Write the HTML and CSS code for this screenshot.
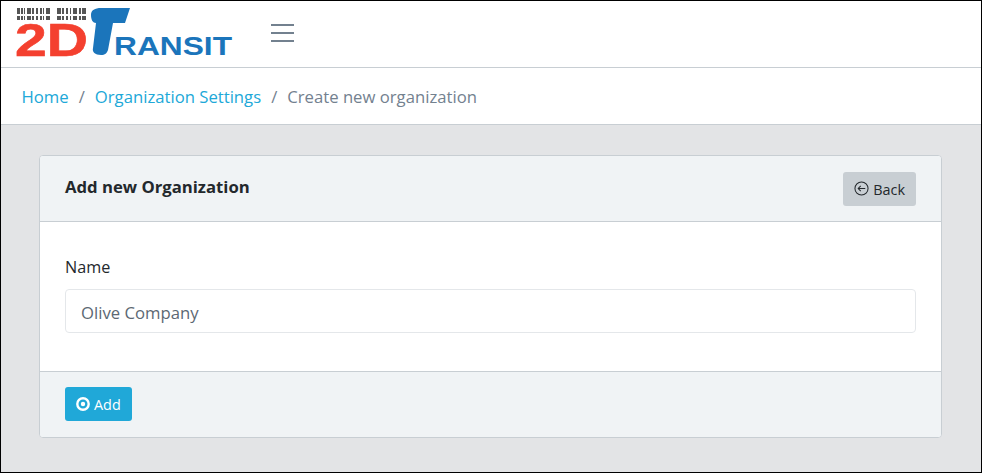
FILE: index.html
```html
<!DOCTYPE html>
<html lang="en">
<head>
<meta charset="utf-8">
<title>Create new organization</title>
<link rel="stylesheet" href="styles.css">
</head>
<body>
<div class="frame">
  <header class="topbar">
    <a class="logo" href="#" aria-label="2D Transit">
      <svg width="222" height="58" viewBox="0 0 222 58" class="logo-svg">
        <g fill="#555">
          <path d="M2 0h3v6H2zM6 0h2v6H6zM9 0h1v6H9zM12 0h4v6h-4zM17 0h2v6h-2zM21 0h2v6h-2zM25 0h2v6h-2zM28 0h1v6h-1zM31 0h4v6h-4z"/>
          <path d="M2 8h3v4H2zM6 8h2v4H6zM9 8h1v4H9zM12 8h4v4h-4zM17 8h2v4h-2zM21 8h2v4h-2zM25 8h2v4h-2zM28 8h1v4h-1zM31 8h4v4h-4z"/>
          <path d="M42 0h4v6h-4zM47 0h2v6h-2zM51 0h2v6h-2zM55 0h1v6h-1zM58 0h4v6h-4zM64 0h2v6h-2zM67 0h4v6h-4z"/>
          <path d="M42 8h4v4h-4zM47 8h2v4h-2zM51 8h2v4h-2zM55 8h1v4h-1zM58 8h4v4h-4zM64 8h2v4h-2zM67 8h4v4h-4z"/>
        </g>
        <text x="0" y="48" class="logo-2d" textLength="73" lengthAdjust="spacingAndGlyphs">2D</text>
        <path fill="#1b75bb" d="M76 7C76 2 80 0 86 0L115 0L110 15L98 15L93 42C92 45 90 47 86 47C80 47 77 44 78 40L81 15C78 15 76 12 76 7Z"/>
        <text x="99" y="47" class="logo-ransit" textLength="118" lengthAdjust="spacingAndGlyphs">RANSIT</text>
      </svg>
    </a>
    <button class="toggler" type="button" aria-label="Toggle navigation">
      <span class="bar"></span><span class="bar"></span><span class="bar"></span>
    </button>
  </header>
  <nav class="crumbs">
    <a href="#">Home</a><span class="sep">/</span><a href="#">Organization Settings</a><span class="sep">/</span><span class="current">Create new organization</span>
  </nav>
  <main class="content">
    <section class="card">
      <div class="card-head">
        <h1 class="card-title">Add new Organization</h1>
        <button class="btn btn-back" type="button">
          <svg class="icon" width="15" height="15" viewBox="0 0 16 16" fill="none" stroke="#23282c" stroke-width="1.1"><circle cx="8" cy="8" r="7"/><path d="M12 8H4.5M7.2 5.3 4.5 8l2.7 2.7"/></svg>
          <span class="btn-text">Back</span>
        </button>
      </div>
      <div class="card-body">
        <label class="label" for="name">Name</label>
        <input class="input" id="name" type="text" value="Olive Company">
      </div>
      <div class="card-foot">
        <button class="btn btn-add" type="button">
          <svg class="icon" width="14" height="14" viewBox="0 0 14 14" fill="none"><circle cx="7" cy="7" r="5.7" stroke="#fff" stroke-width="2.4"/><circle cx="7" cy="7" r="2.2" fill="#fff"/></svg>
          <span>Add</span>
        </button>
      </div>
    </section>
  </main>
</div>
</body>
</html>
```
FILE: styles.css
```css
* { box-sizing: border-box; }
html, body { margin: 0; padding: 0; height: 100%; }
body { font-family: "Open Sans", "Noto Sans", sans-serif; color: #23282c; background: #000; overflow: hidden; }
.frame { height: 473px; border: 1px solid #000; display: flex; flex-direction: column; background: #e3e4e6; }
.topbar { height: 67px; flex: none; background: #fff; border-bottom: 1px solid #c8ced3; display: flex; align-items: flex-start; }
.logo { display: block; width: 222px; height: 58px; margin-left: 14px; margin-top: 7px; flex: none; }
.logo-svg { display: block; }
.logo-2d { font-family: "Liberation Sans", sans-serif; font-weight: 700; font-size: 46px; fill: #f4402f; stroke: #f4402f; stroke-width: 0.6px; }
.logo-ransit { font-family: "Liberation Sans", sans-serif; font-weight: 700; font-size: 26.5px; fill: #1b75bb; }
.toggler { margin-left: 34px; margin-top: 23px; width: 24px; padding: 0; border: 0; background: none; display: flex; flex-direction: column; gap: 6px; }
.bar { display: block; height: 2px; width: 23px; background: #73818f; }
.crumbs { height: 57px; flex: none; background: #fff; border-bottom: 1px solid #c8ced3; padding: 0 20.5px; display: flex; align-items: center; font-size: 16.7px; }
.crumbs a { color: #20a8d8; text-decoration: none; }
.sep { color: #73818f; margin: 0 10px; }
.current { color: #73818f; }
.content { flex: 1; padding: 30px 39px 0 38px; }
.card { background: #fff; border: 1px solid #c8ced3; border-radius: 4px; height: 283px; display: flex; flex-direction: column; overflow: hidden; }
.card-head { height: 66px; flex: none; background: #f0f3f5; border-bottom: 1px solid #c8ced3; padding: 0 25px; display: flex; align-items: center; justify-content: space-between; }
.card-title { margin: 0 0 4px; font-size: 16.7px; font-weight: 700; color: #23282c; }
.btn { font-family: inherit; font-size: 14.4px; border: 0; border-radius: 3px; height: 34px; display: inline-flex; align-items: center; gap: 4px; padding: 0 11px; }
.btn-back { background: #c8ced3; color: #23282c; }
.btn-text { padding-top: 1px; }
.btn-add { background: #20a8d8; color: #fff; }
.icon { display: block; flex: none; }
.card-body { flex: 1; padding: 33px 25px 0; background: #fff; }
.label { display: block; font-size: 16.2px; line-height: 24px; margin-bottom: 10px; color: #23282c; }
.input { display: block; width: 100%; height: 44px; border: 1px solid #e4e7ea; border-radius: 4px; padding: 3px 15px 0; font-family: inherit; font-size: 16.7px; color: #5c6873; background: #fff; outline: 0; }
.card-foot { height: 66px; flex: none; background: #f0f3f5; border-top: 1px solid #c8ced3; padding: 15px 25px 0; }
```
